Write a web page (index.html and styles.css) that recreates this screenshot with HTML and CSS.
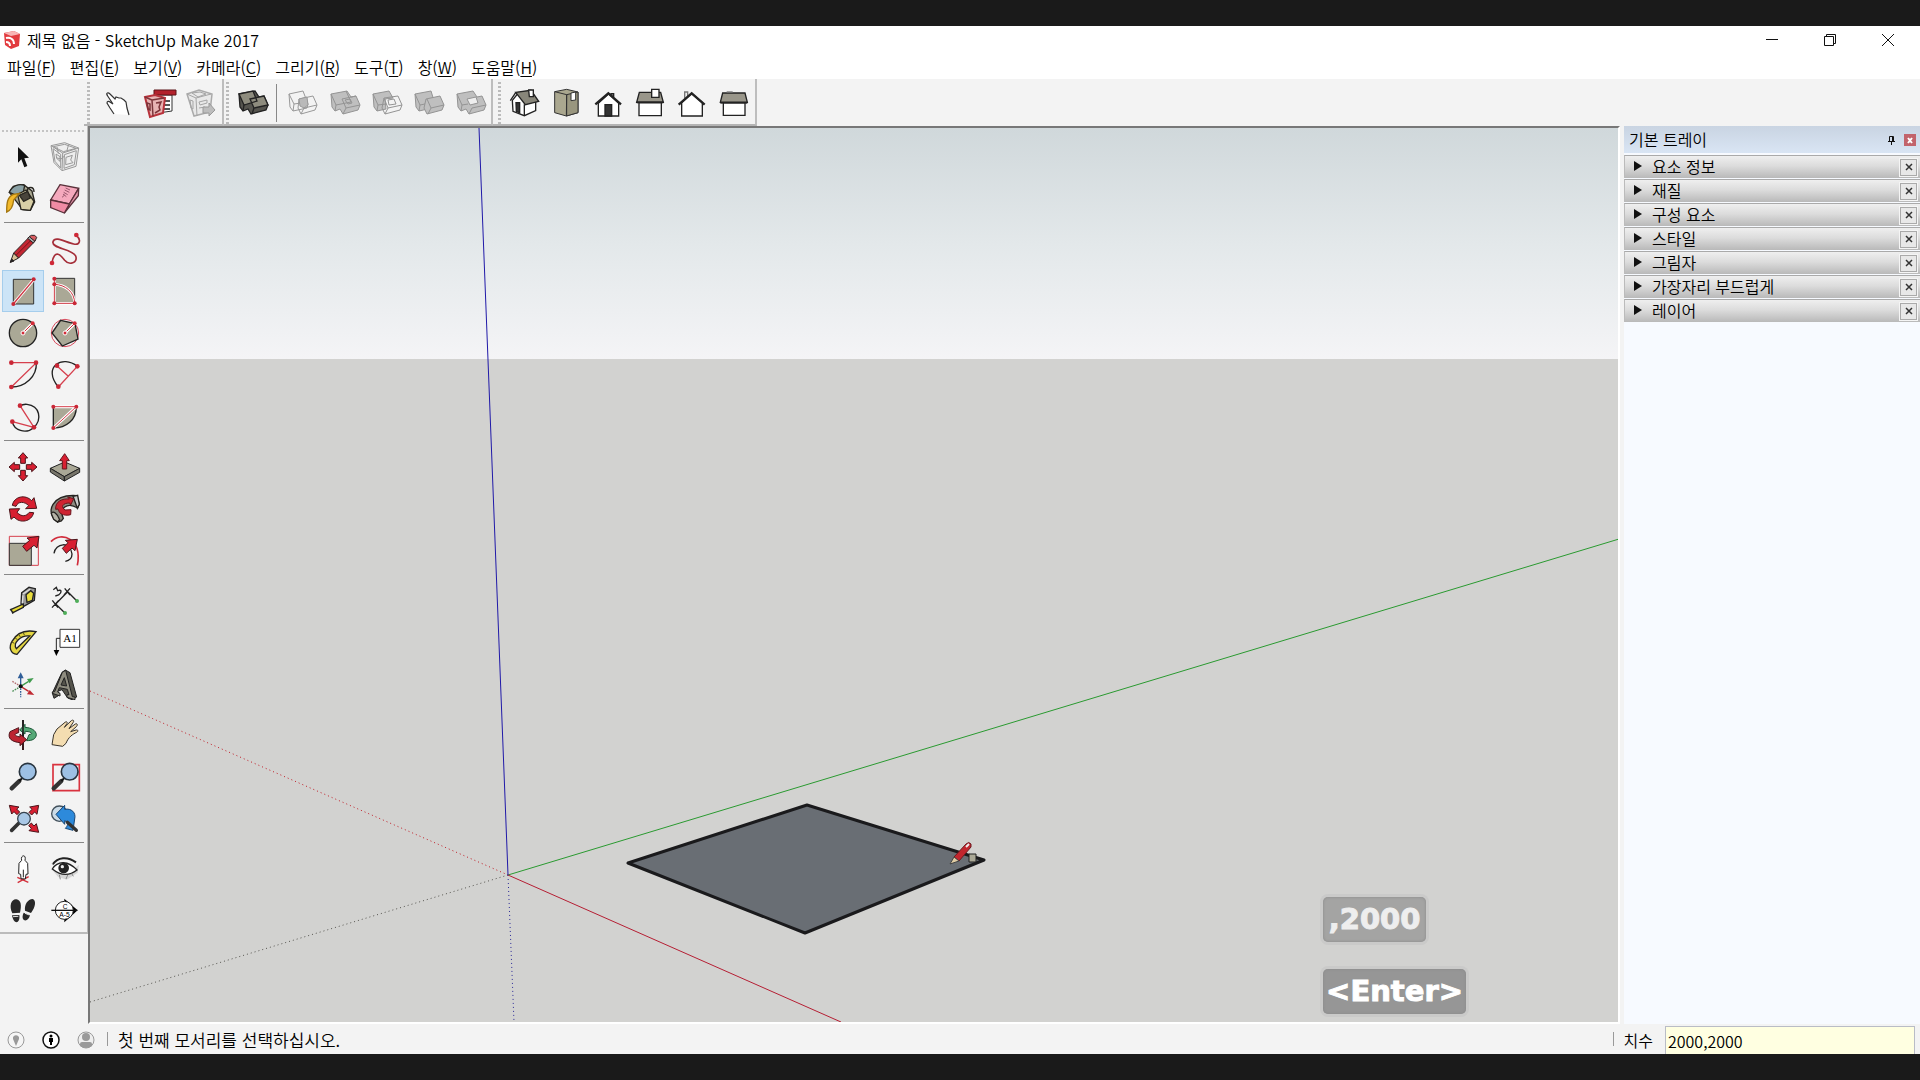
FILE: index.html
```html
<!DOCTYPE html>
<html lang="ko">
<head>
<meta charset="utf-8">
<title>제목 없음 - SketchUp Make 2017</title>
<link rel="stylesheet" href="styles.css">
</head>
<body>
<div class="app">
  <header class="titlebar">
    <svg class="logo" viewBox="0 0 18 20"><path fill="#e23b3f" d="M1 3 11 1l6 3-1 12-8 3-6-4z"/><path fill="#f7b5b5" d="m1 3 7 3 9-2-6-3z"/><path fill="none" stroke="#fff" stroke-width="2" d="M3 8c4-1 8 1 8 6M3 12c3 0 4 1 4 4"/></svg>
    <h1 class="title">제목 없음 - SketchUp Make 2017</h1>
    <div class="window-buttons">
      <button aria-label="최소화"><svg viewBox="0 0 14 14"><path d="M1 6.500h12"/></svg></button>
      <button aria-label="복원"><svg viewBox="0 0 14 14"><path d="M1.500 3.500h9v9h-9zM3.500 3V1.500h9v9H11"/></svg></button>
      <button aria-label="닫기"><svg viewBox="0 0 14 14"><path d="m1 1 12 12M13 1 1 13"/></svg></button>
    </div>
  </header>

  <nav class="menubar" aria-label="메뉴">
    <button>파일(<u>F</u>)</button>
    <button>편집(<u>E</u>)</button>
    <button>보기(<u>V</u>)</button>
    <button>카메라(<u>C</u>)</button>
    <button>그리기(<u>R</u>)</button>
    <button>도구(<u>T</u>)</button>
    <button>창(<u>W</u>)</button>
    <button>도움말(<u>H</u>)</button>
  </nav>

  <div class="toolbars">
    <div class="toolbar">
      <span class="grip"></span>
      <button class="tool" aria-label="상호 작용"><svg viewBox="0 0 42 42"><path fill="#fff" stroke="#333" stroke-width="1.200" d="m18 32-4-6-3-5c0-2 2-2 3-1l3 2-6-9c-1-2 1-3 3-1l5 5 1-2 3 1 2 0 3 2 2 2 1 6 2 7M12 13l-1 0"/></svg></button>
      <button class="tool" aria-label="3D Warehouse"><svg viewBox="0 0 42 42"><path fill="#fff" stroke="#333" d="M18 13h16v16l-14 2z"/><path stroke="#555" stroke-width="2" d="M25 19h7M25 23h7M25 27h7"/><path fill="#b3212c" stroke="#5a1519" d="M16 8h22v5H16z"/><path fill="#e7b3b3" stroke="#b8323b" stroke-width="2" d="m7 15 10-2 10 3-2 15-13 4z"/><path fill="none" stroke="#7b353a" stroke-width="1.500" d="m7 15 7 3 1 16M14 18l12-2M9 21l3 1v6l-2-1zM18 21l5-1-2 5 1 3-5 3"/></svg></button>
      <button class="tool" aria-label="구성요소 공유"><svg viewBox="0 0 42 42"><path fill="#e8e8e8" stroke="#aaa" stroke-width="1.500" d="m7 12 12-4 13 4-2 18-16 4z"/><path fill="none" stroke="#a5a5a5" d="m7 12 9 4 1 18M16 16l15-4M12 11l8-1 6 2-8 3zM19 20l8-2v3l-7 2zM19 26l6-1M10 18l3 1v8l-2-1z"/><path fill="#bdbdbd" stroke="#999" d="M23 25h6v-4l6 7-6 6v-3h-6z"/></svg></button>
    </div>
    <div class="toolbar">
      <span class="grip"></span>
      <button class="tool" aria-label="외부 셸"><svg viewBox="0 0 42 42"><g stroke="#222" stroke-width="1.300"><path fill="#55544e" d="m8 12 16-3 4 6 5-1 4 9-2 5-15 4-3-5-5 2-3-4z"/><path fill="#8e8c7e" d="m8 12 14-3 4 10-13 4zM19 17l14-3 4 9-14 3z"/><path fill="none" d="m13 23-1 6M23 26l-2 6"/></g></svg></button>
      <span class="divider"></span>
      <button class="tool" aria-label="교차"><svg viewBox="0 0 42 42"><g fill="none" stroke="#999"><path d="m8 12 14-3 5 13-1 4-14 3-3-4zM8 12l5 10 14-2M13 22l-1 7M18 17l14-3 4 9-2 5-14 4-3-6zM18 17l5 9 13-3M23 26l-3 6"/><path fill="#b9b9b9" d="m18 17 8-2 1 8-4 3-4-2z"/></g></svg></button>
      <button class="tool" aria-label="결합"><svg viewBox="0 0 42 42"><g fill="#bfbfbf" stroke="#949494"><path d="m8 12 16-3 4 6 5-1 4 9-2 5-15 4-3-5-5 2-3-4z"/><path fill="none" d="m8 12 5 11 15-3-5-11M19 17l14-3M19 17l4 9 14-3M13 23l-1 6M23 26l-3 6M22 18l5-1 2 4-4 1z"/></g></svg></button>
      <button class="tool" aria-label="빼기"><svg viewBox="0 0 42 42"><g fill="none" stroke="#949494"><path fill="#bfbfbf" d="m8 12 16-3 4 7-8 1 1 10-9 2-3-4z"/><path d="m8 12 5 11 8-1M13 23l-1 6M19 16l14-2 4 9-2 5-15 4-3-6zM19 16l4 10 14-3M23 26l-3 6M23 18l6-1 2 5-7 1z"/></g></svg></button>
      <button class="tool" aria-label="트림"><svg viewBox="0 0 42 42"><g fill="#bfbfbf" stroke="#949494"><path d="m8 12 16-3 4 13-3 4-13 3-3-4z"/><path fill="none" d="m8 12 5 11-1 6M13 23l10-2"/><path d="m19 17 14-3 4 9-2 5-15 4-3-6z"/><path fill="none" d="m20 17 4 9 13-3M24 26l-3 6"/></g></svg></button>
      <button class="tool" aria-label="분할"><svg viewBox="0 0 42 42"><g fill="#bfbfbf" stroke="#949494"><path d="m8 12 16-3 4 6 5-1 4 9-2 5-15 4-3-5-5 2-3-4z"/><path fill="none" d="m8 12 5 11-1 6M13 23l6-1M23 26l14-3M23 26l-3 6"/><path fill="#eee" d="m18 17 9-2 2 6-8 2z"/></g></svg></button>
    </div>
    <div class="toolbar">
      <span class="grip"></span>
      <button class="tool" aria-label="등각 투영"><svg viewBox="72 36 126 126"><g stroke="#222" stroke-width="4"><path fill="#fff" d="m100 91 18-22 20 31 32-8v30l-34 15-34-13z"/><path fill="#88867a" d="m110 67 46-6 23 33-40 10z"/><path fill="none" d="m94 92 16-24M136 103v34"/><path fill="#333" d="M111 98h11v30l-10-4z"/><path fill="#fff" d="M149 60h14v20h-12z"/></g></svg></button>
      <button class="tool" aria-label="맨 위"><svg viewBox="198 36 126 126"><g stroke="#333" stroke-width="3"><path fill="#aaa78f" d="m227 65 36-7 34 8v62l-35 10-35-10z"/><path fill="#99967f" d="m263 74 34-8v62l-35 10z"/><path fill="none" d="m227 65 36 9v63"/><path fill="#fff" d="m276 69 14-3v24l-14 2z"/></g></svg></button>
      <button class="tool" aria-label="앞"><svg viewBox="324 36 126 126"><g stroke="#222" stroke-width="4"><path fill="#fff" d="M358 100v38h61v-38l-30-29z"/><path fill="#333" d="M378 104h20v34h-20z"/><path fill="#777" d="M396 75v-4h8v11"/><path fill="none" stroke-width="7" d="m349 103 39-33 38 33"/></g></svg></button>
      <button class="tool" aria-label="오른쪽"><svg viewBox="450 36 126 126"><g stroke="#222" stroke-width="4"><path fill="#fff" d="M480 98h67v39h-67z"/><path fill="#99968a" d="M481 67h64l8 30h-80z"/><path stroke-width="6" d="M473 97h80"/><path fill="#fff" d="M518 58h22v24h-22z"/></g></svg></button>
      <button class="tool" aria-label="뒤"><svg viewBox="576 36 126 126"><g stroke="#222" stroke-width="4"><path fill="#eee" stroke="#777" d="M617 85V66h9v14"/><path fill="#fff" d="M608 98v40h62V98l-32-28z"/><path fill="none" stroke-width="7" d="m599 104 39-34 39 34"/></g></svg></button>
      <button class="tool" aria-label="왼쪽"><svg viewBox="702 36 126 126"><g stroke="#222" stroke-width="4"><path fill="#fff" d="M733 98h65v38h-65z"/><path fill="#99968a" d="M731 69h67l7 28h-81z"/><path stroke-width="6" d="M724 98h81"/><path stroke="#777" d="M743 66h18"/></g></svg></button>
    </div>
  </div>

  <main class="workspace">
    <aside class="toolbox" aria-label="큰 도구 세트">
      <span class="grip-wide"></span>
      <div class="tool-group">
        <button class="tool" aria-label="선택"><svg viewBox="6 48 126 126"><path fill="#111" d="m54 81 33 32-14 2 9 23-9 4-9-24-10 10z"/></svg></button>
        <button class="tool" aria-label="구성요소 만들기"><svg viewBox="132 48 126 126"><g fill="none" stroke="#999" stroke-width="3"><path fill="#eee" d="m153 77 41-9 42 16-8 55-42 13-24-24z"/><path d="m153 77 35 22 48-15M188 99l-2 53M160 80l34-7 34 12-38 10zM159 86l6 38 17 20V103zM193 104l36-12-6 42-31 11zM168 102l12 8v14l-10-9zM198 112l19-6-5 14 7 8-22 6zM171 81l4 20M206 73l-5 18M195 107l-12 10-15-4"/></g></svg></button>
        <button class="tool" aria-label="페인트"><svg viewBox="6 174 126 126"><g stroke="#282620" stroke-width="4"><path fill="#aaa891" d="m28 217 12-18 31-5 25 19 8 33-13 25-23-2z"/><path fill="#8aa1a5" d="M28 217c8-20 28-27 46-21l-4 21-23 8z"/><path fill="#d8cfa6" d="m53 223 25-13 24 34-11 27-28-3z"/><path fill="#49453b" d="m58 226 25-12 8 20-20 10z"/><path fill="none" d="M82 213c0-13 20-16 20 3"/><path fill="#f2b92b" stroke="#a47711" d="M20 276c0-25 1-45 20-53l18-3-17 20c-2 19-7 31-21 36z"/></g></svg></button>
        <button class="tool" aria-label="지우개"><svg viewBox="132 174 126 126"><g stroke="#59313a" stroke-width="4"><path fill="#f5a9bd" d="m180 194 56 11-28 47-56-12z"/><path fill="#e795ab" d="m236 205-1 22-42 52 15-27z"/><path fill="#ef8ba4" d="m152 240 56 12-15 27-41-16z"/><path fill="none" stroke="#96566b" stroke-width="3" d="m186 232 8-7m-5-3 10 8m-8-13 12 7m-9-14 14 7m-11-13 13 6"/></g></svg></button>
      </div>
      <div class="tool-group">
        <button class="tool" aria-label="선"><svg viewBox="6 324 126 126"><g stroke="#282323" stroke-width="3"><path fill="#d9c298" d="m31 427 10-28 15 15z"/><path fill="#222" d="m31 427 4-10 7 6z"/><path fill="#c32632" d="m41 399 45-46 16 14-46 47z"/><path stroke="#75141b" d="m49 405 45-45"/><path fill="#aaa" d="m83 355 6-6 16 13-5 7z"/><path fill="#d75b60" d="m88 350 6-4h10l6 6-5 12z"/></g></svg></button>
        <button class="tool" aria-label="자유형"><svg viewBox="132 324 126 126"><path fill="none" stroke="#a52e39" stroke-width="5" d="M229 346c16 14 10 30-8 26-22-4-56-26-62-7-6 21 58 21 68 43 8 21-20 29-33 13-11-15-30-36-38 7"/><g fill="#cf2837"><circle cx="229" cy="345" r="7"/><circle cx="156" cy="429" r="7"/></g></svg></button>
        <button class="tool selected" aria-label="직사각형" aria-pressed="true"><svg viewBox="6 450 126 126"><path fill="#aaa896" stroke="#333" stroke-width="3" d="M40 478h61v74H40z"/><path stroke="#fff" stroke-width="9" d="m40 552 61-73"/><path stroke="#ce3542" stroke-width="4" d="m40 552 61-73"/><g fill="#c92736"><circle cx="40" cy="552" r="6"/><circle cx="101" cy="478" r="6"/></g></svg></button>
        <button class="tool" aria-label="회전된 직사각형"><svg viewBox="132 450 126 126"><path fill="#aaa896" stroke="#333" stroke-width="3" d="M163 475h61v75h-61z"/><path fill="none" stroke="#fff" stroke-width="8" d="M163 477v73h61c0-34-28-56-61-57"/><path fill="none" stroke="#ce3542" stroke-width="3" d="M163 477v73h61c0-34-28-56-61-57"/><g fill="#c92736"><circle cx="163" cy="476" r="6"/><circle cx="163" cy="493" r="6"/><circle cx="163" cy="550" r="6"/><circle cx="224" cy="550" r="6"/></g></svg></button>
        <button class="tool" aria-label="원"><svg viewBox="6 6 126 126"><circle cx="69" cy="69" r="41" fill="#aaa896" stroke="#222" stroke-width="4"/><path stroke="#fff" stroke-width="9" d="m69 69 29-29"/><path stroke="#d32c39" stroke-width="3" d="m69 69 29-29"/><circle cx="69" cy="69" r="6" fill="#d32c39" stroke="#fff" stroke-width="3"/><circle cx="98" cy="40" r="6" fill="#d32c39"/></svg></button>
        <button class="tool" aria-label="다각형"><svg viewBox="132 6 126 126"><circle cx="195" cy="69" r="41" fill="none" stroke="#d9485a" stroke-width="3"/><path fill="#aaa896" stroke="#222" stroke-width="4" d="m182 31 43 10 9 46-47 21-31-39z"/><path stroke="#fff" stroke-width="9" d="m195 69 29-29"/><path stroke="#d32c39" stroke-width="3" d="m195 69 29-29"/><circle cx="195" cy="69" r="6" fill="#d32c39" stroke="#fff" stroke-width="3"/><circle cx="224" cy="40" r="6" fill="#d32c39"/></svg></button>
        <button class="tool" aria-label="호"><svg viewBox="6 132 126 126"><path fill="none" stroke="#222" stroke-width="4" d="M109 158c2 41-33 73-75 73"/><path fill="none" stroke="#d6404e" stroke-width="4" d="M34 158h75l-75 73"/><g fill="#c92736"><circle cx="34" cy="158" r="7"/><circle cx="108" cy="158" r="7"/><circle cx="34" cy="231" r="7"/></g></svg></button>
        <button class="tool" aria-label="2점 호"><svg viewBox="132 132 126 126"><path fill="none" stroke="#222" stroke-width="4" d="M175 231c-50-61 13-98 57-62"/><path fill="none" stroke="#d6404e" stroke-width="4" d="m175 231 57-62M171 168l34 31"/><g fill="#c92736"><circle cx="171" cy="167" r="7"/><circle cx="232" cy="169" r="7"/><circle cx="175" cy="230" r="7"/></g></svg></button>
        <button class="tool" aria-label="3점 호"><svg viewBox="6 258 126 126"><path fill="none" stroke="#222" stroke-width="4" d="M37 335c4 25 40 39 64 18 26-24 19-66-20-70-9-1-15 1-21 5"/><path fill="none" stroke="#d6404e" stroke-width="4" d="m60 287 42 65-65-17"/><g fill="#c92736"><circle cx="60" cy="287" r="7"/><circle cx="102" cy="352" r="7"/><circle cx="37" cy="335" r="7"/></g></svg></button>
        <button class="tool" aria-label="원형"><svg viewBox="132 258 126 126"><path fill="#aaa896" stroke="#222" stroke-width="4" d="M160 290v64c39 0 69-24 69-64z"/><path fill="none" stroke="#fff" stroke-width="9" d="M160 290h69l-69 64"/><path fill="none" stroke="#d6404e" stroke-width="3" d="M160 290h69l-69 64"/><g fill="#c92736"><circle cx="160" cy="290" r="6"/><circle cx="229" cy="290" r="6"/><circle cx="160" cy="354" r="6"/></g></svg></button>
      </div>
      <div class="tool-group">
        <button class="tool" aria-label="이동"><svg viewBox="6 18 126 126"><path fill="#d81f31" stroke="#4a151a" stroke-width="3" d="m69 38 14 16h-7v16H62V54h-7zM69 123l14-16h-7V91H62v16h-7zM27 81l16-14v7h16v14H43v7zM111 81 95 67v7H79v14h16v7z"/></svg></button>
        <button class="tool" aria-label="밀기/끌기"><svg viewBox="132 18 126 126"><g stroke="#222" stroke-width="3"><path fill="#aaa896" d="m151 85 43-19 45 19-46 25z"/><path fill="#77756a" d="m151 85 42 25v13l-42-27zM239 85l-46 25v13l46-26z"/><path fill="#d81f31" stroke="#65161e" d="m194 41 14 21h-8v25h-13V62h-8z"/></g></svg></button>
        <button class="tool" aria-label="회전"><svg viewBox="6 144 126 126"><path fill="#d81f31" stroke="#4a151a" stroke-width="3" d="M37 196c5-27 39-34 58-14l7-9 8 32-33 1 9-9c-12-13-32-14-38 2zM101 218c-6 27-41 34-59 13l-9 7-5-31 31-1-8 11c14 15 28 12 37 0z"/></svg></button>
        <button class="tool" aria-label="따라가기"><svg viewBox="132 144 126 126"><g stroke="#24221f" stroke-width="4"><path fill="#8d8b80" d="M173 246c-42-31-14-84 57-79l8 25-5 12c-32-19-57 1-43 31l-6 8z"/><path fill="#b6b4a8" d="M154 221c4-12 19 0 25 18l-6 7-12-8z"/><path fill="#ccc" d="m219 169 14-3 5 27-6 12z"/><path fill="#cf2432" stroke="#6b151d" stroke-width="3" d="M167 208c-2-24 20-33 41-31l-5-6 18 5-9 19-3-6c-22 0-27 12-14 21l18-1-1 15c-14 4-30 0-34-8-2-3-3-8-4-9z"/></g></svg></button>
        <button class="tool" aria-label="배율"><svg viewBox="6 270 126 126"><path fill="none" stroke="#d6404e" stroke-width="3" d="M28 289h87v87H28z"/><path fill="#aaa896" stroke="#333" stroke-width="3" d="M28 310h66v66H28z"/><path fill="#d81f31" stroke="#4a151a" stroke-width="3" d="m117 289-6 35-9-8-22 18-12-15 21-18-8-7z"/></svg></button>
        <button class="tool" aria-label="오프셋"><svg viewBox="132 270 126 126"><path fill="none" stroke="#d12c3b" stroke-width="5" d="M153 305c30-33 96-9 79 71"/><path fill="none" stroke="#222" stroke-width="4" d="M162 340c4-31 50-38 54 2 0 12-8 20-20 22"/><path fill="#d81f31" stroke="#4a151a" stroke-width="3" d="m232 298-7 34-9-8-17 16-12-15 17-17-8-7z"/></svg></button>
      </div>
      <div class="tool-group">
        <button class="tool" aria-label="줄자"><svg viewBox="6 30 126 126"><g stroke="#222" stroke-width="4"><path fill="#999" d="m65 68 22-16 19 4-3 35-33 19-7-8z"/><path fill="#e9dd3f" d="m78 74 14-12 9 8-4 21-16 6z"/><path fill="none" stroke="#ddd" d="m69 72 22-15M69 76l-2 23"/><path fill="#e5d832" d="m32 119 38-17v10l-31 16zM32 116l7 15"/></g></svg></button>
        <button class="tool" aria-label="치수"><svg viewBox="132 30 126 126"><path fill="none" stroke="#222" stroke-width="4" d="m230 92-27-27-36 37 27 26M194 55l16 20m0-20-18 20M157 91l17 22m2-22-20 22M160 59l9-7 4 10c12-5 14 5 3 13l-10 3"/><g fill="#4fae59"><circle cx="231" cy="93" r="6"/><circle cx="195" cy="129" r="6"/></g></svg></button>
        <button class="tool" aria-label="각도기"><svg viewBox="6 156 126 126"><path fill="#e4d642" stroke="#222" stroke-width="4" fill-rule="evenodd" d="M51 253c-21-2-25-23-15-39 17-30 42-35 72-29zM49 236c-11-15 11-41 40-38z"/><path fill="none" stroke="#57501c" stroke-width="3" d="m34 215 9 5M44 202l8 7M56 193l5 8M70 188l3 7"/></svg></button>
        <button class="tool" aria-label="텍스트"><svg viewBox="132 156 126 126"><path fill="#fff" stroke="#333" stroke-width="3" d="M180 178h59v54h-59z"/><path fill="none" stroke="#222" stroke-width="3" d="M180 205h-11v38"/><path d="M161 240h17l-9 18z"/><text x="190" y="216" class="label-serif">A1</text></svg></button>
        <button class="tool" aria-label="축"><svg viewBox="6 282 126 126"><g stroke-width="4"><path stroke="#305e98" d="M62 349v-30"/><path stroke="#305e98" stroke-dasharray="5 3" d="M62 355v27"/><path fill="#305e98" d="m62 307 9 18H53z"/><path stroke="#3f9b4d" d="m62 349 24-15"/><path fill="#3f9b4d" d="m101 324-12 16-8-13z"/><path stroke="#c02932" d="m62 349 24 15"/><path fill="#c02932" d="m103 375-22-2 8-13z"/><path fill="none" stroke="#b36a6d" stroke-dasharray="5 3" d="m62 349-25-15"/><path fill="none" stroke="#478d52" stroke-dasharray="5 3" d="m62 349-26 16"/></g><circle cx="62" cy="349" r="6" fill="#111"/></svg></button>
        <button class="tool" aria-label="3D 텍스트"><svg viewBox="132 282 126 126"><g stroke="#222" stroke-width="3"><path fill="#55544c" d="m157 369 29-62 10-7 14 8 20 73-14 8-13-5-17-25-13 5 2 13-13 8z"/><path fill="#8f8d80" fill-rule="evenodd" d="m157 366 7-1 23-58 10-6 20 79 8 1v8l-24-7v-8h6l-5-16-24-5-5 13 7 4v8l-23-8zM183 345l17 3-7-25z"/></g></svg></button>
      </div>
      <div class="tool-group">
        <button class="tool" aria-label="궤도"><svg viewBox="6 42 126 126"><g stroke-width="3"><path fill="none" stroke="#3a1c1f" stroke-width="6" d="M69 60v90"/><path fill="#55a977" stroke="#1d5738" d="m59 90 16-17v9c18 1 33 9 34 22-1 13-12 18-29 18l7-18c18-4 2-10-12-10v8z"/><path fill="#bd2431" stroke="#50141b" d="m56 83-26 12c-10 21 8 31 30 33v9l20-18-20-17v9c-18-4-20-9-4-13z"/><path stroke="#222" stroke-width="5" d="M69 60v48"/></g></svg></button>
        <button class="tool" aria-label="이동 보기"><svg viewBox="132 42 126 126"><path fill="#f4ddb1" stroke="#39332a" stroke-width="3" stroke-linejoin="round" d="m156 134 5-30 10-17 24-20c7-5 8 2 5 5l-7 10 21-20c5-4 10 0 5 6l-12 18 19-14c6-3 8 3 3 8l-17 15 16-5c7-1 7 4 2 7-11 5-25 14-32 33l-10 9z"/></svg></button>
        <button class="tool" aria-label="확대/축소"><svg viewBox="6 168 126 126"><path stroke="#333" stroke-width="13" stroke-linecap="round" d="m35 265 23-22"/><path stroke="#111" stroke-width="6" d="m58 243 13-13"/><circle cx="83" cy="215" r="25" fill="#9dc0e4" stroke="#28343f" stroke-width="5"/></svg></button>
        <button class="tool" aria-label="창 확대/축소"><svg viewBox="132 168 126 126"><path fill="none" stroke="#d9333f" stroke-width="5" d="M159 194h79v78h-79z"/><path stroke="#333" stroke-width="13" stroke-linecap="round" d="m161 265 23-22"/><path stroke="#111" stroke-width="6" d="m184 243 13-13"/><circle cx="209" cy="215" r="25" fill="#9dc0e4" stroke="#28343f" stroke-width="5"/></svg></button>
        <button class="tool" aria-label="범위 확대/축소"><svg viewBox="6 294 126 126"><path fill="#d81f31" stroke="#4a151a" stroke-width="3" d="m28 316 29 5-7 6 9 9-8 8-9-9-7 7zM116 316l-5 27-7-7-9 9-8-8 9-9-7-7zM116 397l-29-5 7-7-8-8 8-8 8 9 7-7z"/><path stroke="#333" stroke-width="11" stroke-linecap="round" d="m35 391 22-22"/><circle cx="72" cy="356" r="19" fill="#a9c8e6" stroke="#37434e" stroke-width="4"/></svg></button>
        <button class="tool" aria-label="이전"><svg viewBox="132 294 126 126"><circle cx="178" cy="341" r="23" fill="#cbdbe7" stroke="#42505b" stroke-width="4"/><path fill="#2d8adb" stroke="#194673" stroke-width="3" d="m168 343 26-27v12c20-4 35 10 30 29l-5 34-23-6c7-7 11-17-2-23v11z"/><path stroke="#333" stroke-width="10" stroke-linecap="round" d="m202 367 27 24"/></svg></button>
      </div>
      <div class="tool-group">
        <button class="tool" aria-label="카메라 배치"><svg viewBox="6 444 126 126"><path fill="none" stroke="#d32f3a" stroke-width="4" d="m52 532 33 15M86 530l-33 18"/><path fill="#fff" stroke="#222" stroke-width="3" d="M65 481c-5-16 15-20 10 0l8 9 1 32-6 1-2 14-13-1-1-13-6-2 1-31zM70 509v23"/></svg></button>
        <button class="tool" aria-label="둘러보기"><svg viewBox="132 444 126 126"><path fill="#aaa" fill-opacity=".400" d="m154 506 20 24 26 9 33-21 4-24-21 18-33 8z"/><path fill="#fff" stroke="#222" stroke-width="4" d="M157 507c16-26 48-25 74 3-22 17-48 18-74-3z"/><circle cx="191" cy="504" r="16" fill="#222"/><circle cx="187" cy="500" r="5" fill="#eee"/><path fill="none" stroke="#222" stroke-width="6" d="M158 493c15-22 44-25 70-6"/><path fill="none" stroke="#888" stroke-width="3" d="m156 489 4 5M178 524l3 14M203 525l-5 12M215 521l5 8"/></svg></button>
        <button class="tool" aria-label="이동 시점"><svg viewBox="6 570 126 126"><path fill="#282828" d="M37 640c-11-22-3-43 12-42 15 2 16 19 11 40zM36 646l22-1c4 26-17 31-22 1zM75 632c-2-19 8-34 23-35 12 5 8 25-5 42zM71 638l19 8c-6 25-31 17-19-8z"/><path fill="none" stroke="#ddd" stroke-width="3" d="m39 650 16-1M75 640l13 5"/></svg></button>
        <button class="tool" aria-label="단면"><svg viewBox="132 570 126 126"><path d="m193 596 40 35-40 36z"/><circle cx="193" cy="631" r="27" fill="#fff" stroke="#222" stroke-width="3"/><path stroke="#111" stroke-width="4" d="M154 631h78"/><text x="188" y="626" class="label-small">C</text><text x="178" y="650" class="label-small">A-5</text></svg></button>
      </div>
    </aside>

    <section class="viewport" aria-label="모델 보기">
      <svg class="scene" viewBox="90 128 1528 894" preserveAspectRatio="xMidYMid slice">
        <defs>
          <linearGradient id="sky" x1="0" y1="0" x2="0" y2="1"><stop offset="0" stop-color="#d0d8db"/><stop offset=".500" stop-color="#e3e8ea"/><stop offset="1" stop-color="#f4f4f6"/></linearGradient>
        </defs>
        <path fill="#d2d2d0" d="M0 128h1920v894H0z"/>
        <path fill="url(#sky)" d="M0 128h1920v231H0z"/>
        <g fill="none" stroke-width="1">
          <path stroke="#c01c26" stroke-dasharray="1 3" d="M90 691 508 875"/>
          <path stroke="#55544f" stroke-dasharray="1 3" d="M90 1002l418-127"/>
          <path stroke="#2a2898" stroke-dasharray="1 3" d="m508 875 6 147"/>
          <path stroke="#2a9a30" d="M508 875 1619 539"/>
          <path stroke="#b51e33" d="m508 875 333 147"/>
          <path stroke="#2019a8" d="M508 875 479 128"/>
        </g>
        <path fill="#696e74" stroke="#1a1a1c" stroke-width="3" stroke-linejoin="round" d="m628 863 179-58 177 55-179 73z"/>
        <path fill="#aaa896" stroke="#222" stroke-width="1" d="M969 854h7v8h-7z"/>
        <path fill="#c2262e" stroke="#6c1a20" stroke-width="1" d="m954 857 12-13q3-3 5 0v3l-12 14z"/>
        <path fill="#e1cda4" stroke="#444" stroke-width="1" d="m950 864 4-7 5 4z"/>
        <path stroke="#eee" stroke-width="2" d="m966 847 3-3"/>
      </svg>
      <div class="keys">
        <kbd class="key fading">,2000</kbd>
        <kbd class="key">&lt;Enter&gt;</kbd>
      </div>
    </section>

    <aside class="tray">
      <header class="tray-header">
        <h2>기본 트레이</h2>
        <button class="pin" aria-label="고정"><svg viewBox="0 0 9 10"><path fill="none" stroke="#111" d="M2.500 6V1.500h4V6M1 6.500h7M4.500 7v3M5.500 2v4"/></svg></button>
        <button class="tray-close" aria-label="트레이 닫기"><svg viewBox="0 0 12 12"><path stroke="#fff" stroke-width="2" d="m4 4 4 5M8 4 4 9"/></svg></button>
      </header>
      <ul class="panels">
        <li class="panel"><button class="panel-title">요소 정보</button><button class="panel-close" aria-label="닫기"><svg viewBox="0 0 8 8"><path d="m1 1 6 6M7 1 1 7"/></svg></button></li>
        <li class="panel"><button class="panel-title">재질</button><button class="panel-close" aria-label="닫기"><svg viewBox="0 0 8 8"><path d="m1 1 6 6M7 1 1 7"/></svg></button></li>
        <li class="panel"><button class="panel-title">구성 요소</button><button class="panel-close" aria-label="닫기"><svg viewBox="0 0 8 8"><path d="m1 1 6 6M7 1 1 7"/></svg></button></li>
        <li class="panel"><button class="panel-title">스타일</button><button class="panel-close" aria-label="닫기"><svg viewBox="0 0 8 8"><path d="m1 1 6 6M7 1 1 7"/></svg></button></li>
        <li class="panel"><button class="panel-title">그림자</button><button class="panel-close" aria-label="닫기"><svg viewBox="0 0 8 8"><path d="m1 1 6 6M7 1 1 7"/></svg></button></li>
        <li class="panel"><button class="panel-title">가장자리 부드럽게</button><button class="panel-close" aria-label="닫기"><svg viewBox="0 0 8 8"><path d="m1 1 6 6M7 1 1 7"/></svg></button></li>
        <li class="panel"><button class="panel-title">레이어</button><button class="panel-close" aria-label="닫기"><svg viewBox="0 0 8 8"><path d="m1 1 6 6M7 1 1 7"/></svg></button></li>
      </ul>
    </aside>
  </main>

  <footer class="statusbar">
    <div class="status-icons">
      <button aria-label="지리적 위치"><svg viewBox="0 0 18 18"><circle cx="9" cy="9" r="8" fill="#f5f5f5" stroke="#999"/><path fill="#999" d="M9 15 6 8c-1-5 7-5 6 0z"/></svg></button>
      <button aria-label="크레딧"><svg viewBox="0 0 18 18"><circle cx="9" cy="9" r="8" fill="#fff" stroke="#111" stroke-width="1.500"/><circle cx="9" cy="5" r="1.500"/><path d="M7 7h4v4h-1v3H8v-3H7z"/></svg></button>
      <button aria-label="로그인"><svg viewBox="0 0 18 18"><circle cx="9" cy="9" r="8" fill="#eee" stroke="#999"/><circle cx="9" cy="6" r="4" fill="#999"/><path fill="#999" d="M3 15v-2q0-2 2-2h8q2 0 2 2v2q-6 4-12 0z"/></svg></button>
    </div>
    <p class="hint">첫 번째 모서리를 선택하십시오.</p>
    <label class="measure-label" for="measure">치수</label>
    <input class="measure" id="measure" type="text" value="2000,2000">
  </footer>
</div>
</body>
</html>
```
FILE: styles.css
```css
* {
  box-sizing: border-box;
}

body {
  margin: 0;
  padding: 26px 0;
  background: #1a1a1a;
  color: #000;
  font: 350 16px/24px "Noto Sans CJK KR", "Noto Sans", sans-serif;
}

button {
  margin: 0;
  padding: 0;
  border: 0;
  background: none;
  color: inherit;
  font: inherit;
}

h1,
h2,
p,
ul {
  margin: 0;
  padding: 0;
  font-size: 16px;
  font-weight: inherit;
}

svg {
  display: block;
}

.app {
  display: flex;
  flex-direction: column;
  min-height: calc(100vh - 52px);
  background: #f3f3f3;
}

/* Title and menu */

.titlebar {
  display: flex;
  align-items: center;
  height: 28px;
  padding: 0 3px;
  background: #fff;
}

.logo {
  width: 18px;
  height: 20px;
  margin-right: 6px;
}

.title {
  flex: 1;
  line-height: 26px;
}

.window-buttons {
  display: flex;
}

.window-buttons button {
  display: grid;
  place-items: center;
  width: 58px;
  height: 28px;
}

.window-buttons svg {
  width: 14px;
  height: 14px;
  fill: none;
  stroke: #111;
}

.menubar {
  display: flex;
  gap: 14px;
  height: 25px;
  padding-left: 7px;
  background: #fff;
  line-height: 26px;
}

.menubar u {
  text-underline-offset: 2px;
}

/* Tool bars */

.toolbars {
  display: flex;
  height: 47px;
  padding-left: 84px;
}

.toolbar {
  display: flex;
  align-items: center;
  padding: 3px 0 0 3px;
  border-right: 2px solid #bdbdbd;
  border-bottom: 2px solid #b4b4b4;
}

.grip {
  width: 3px;
  height: 42px;
  margin-right: 6px;
  background: repeating-linear-gradient(#bbb 0 2px, transparent 2px 4px);
}

.toolbar + .toolbar .grip {
  margin-right: 2px;
}

.toolbar + .toolbar {
  padding-left: 2px;
}

.toolbar:last-child {
  padding-left: 5px;
}

.divider {
  width: 1px;
  height: 38px;
  margin: 0 4px 0 3px;
  background: #888;
}

.tool {
  width: 42px;
  height: 42px;
}

.tool svg {
  width: 42px;
  height: 42px;
}

.tool.selected {
  background: #cce4f7;
  box-shadow: inset 0 0 0 1px #a5cdec;
}

.label-serif {
  font: 33px "Liberation Serif", serif;
}

.label-small {
  font: 20px "Liberation Sans", sans-serif;
}

/* Work area */

.workspace {
  display: flex;
  flex: 1;
}

.toolbox {
  align-self: flex-start;
  width: 88px;
  padding: 4px 0 0 2px;
  border-right: 1px solid #bbb;
  border-bottom: 2px solid #bbb;
}

.grip-wide {
  display: block;
  width: 82px;
  height: 2px;
  margin-bottom: 4px;
  background: repeating-linear-gradient(90deg, #c4c4c4 0 2px, transparent 2px 4px);
}

.tool-group {
  display: grid;
  grid-template-columns: 42px 42px;
}

.tool-group + .tool-group::before {
  grid-column: 1 / -1;
  height: 1px;
  margin: 2px 2px 5px;
  background: #888;
  content: "";
}

.viewport {
  position: relative;
  flex: 1;
  overflow: hidden;
  border: 2px solid #fff;
  border-top-color: #777;
  border-left-color: #777;
}

.scene {
  position: absolute;
  inset: 0;
  width: 100%;
  height: 100%;
}

.keys {
  position: absolute;
  right: 152px;
  bottom: 8px;
  display: grid;
  justify-items: start;
  gap: 27px;
}

.key {
  min-width: 103px;
  padding: 0 3px;
  border-radius: 5px;
  background: #969696;
  box-shadow: 0 0 0 3px #cacac9, inset 0 0 3px #888;
  color: #fff;
  font: 700 29px/45px "DejaVu Sans", sans-serif;
  text-align: center;
  -webkit-text-stroke: 1px;
}

.key.fading {
  background: #a4a4a3;
  color: #eee;
}

/* Tray */

.tray {
  width: 296px;
  margin-left: 4px;
  background: #f7faff;
}

.tray-header {
  display: flex;
  align-items: center;
  height: 27px;
  padding: 0 4px 0 5px;
  background: linear-gradient(#c9d4e2, #d9e5f4);
}

.tray-header h2 {
  flex: 1;
  padding-bottom: 2px;
}

.pin svg {
  width: 9px;
  height: 10px;
}

.tray-close {
  margin-left: 8px;
  background: #c2636b;
}

.tray-close svg {
  width: 12px;
  height: 12px;
}

.panels {
  display: grid;
  gap: 1px;
  padding-top: 2px;
  list-style: none;
}

.panel {
  display: flex;
  align-items: center;
  height: 23px;
  padding-right: 3px;
  border-top: 1px solid #aaa;
  border-left: 1px solid #bbb;
  background: linear-gradient(#efefef, #dcdcdc 45%, #b9b9b9);
}

.panel-title {
  display: flex;
  flex: 1;
  align-items: center;
  gap: 10px;
  height: 22px;
  padding: 0 0 2px 9px;
  line-height: 20px;
}

.panel-title::before {
  width: 8px;
  height: 10px;
  background: #111;
  clip-path: polygon(0 0, 100% 50%, 0 100%);
  content: "";
}

.panel-close {
  display: grid;
  place-items: center;
  width: 17px;
  height: 17px;
  border: 1px solid #aaa;
  outline: 1px solid #f5f5f5;
  background: #e8e8e8;
}

.panel-close svg {
  width: 8px;
  height: 8px;
  stroke: #333;
  stroke-width: 1.5;
}

/* Status bar */

.statusbar {
  display: flex;
  align-items: center;
  height: 30px;
  padding-right: 5px;
}

.status-icons {
  display: flex;
  gap: 17px;
  padding: 2px 12px 0 7px;
}

.status-icons svg {
  width: 18px;
  height: 18px;
}

.hint {
  flex: 1;
  padding: 1px 0 0 11px;
  background: linear-gradient(#999, #999) 0 50% / 1px 14px no-repeat;
  font-size: 17px;
}

.measure-label {
  padding: 1px 12px 0 11px;
  background: linear-gradient(#999, #999) 0 50% / 1px 14px no-repeat;
}

.measure {
  width: 250px;
  height: 28px;
  margin-top: 2px;
  padding: 0 2px;
  border: 1px solid #b9bcc6;
  border-bottom: 0;
  background: #ffffe1;
  color: inherit;
  font: inherit;
}
```
